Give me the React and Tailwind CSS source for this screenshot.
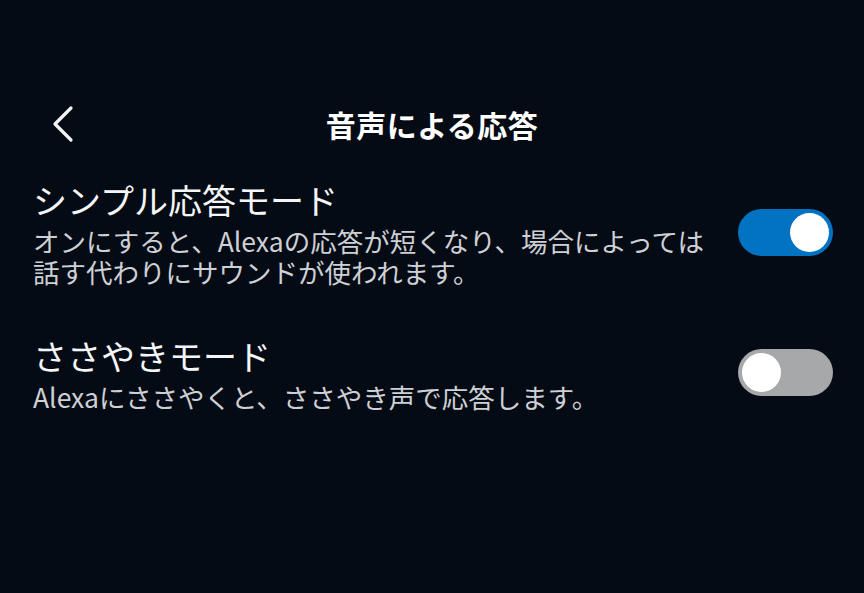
export default function App() {
  return (
    <div
      className="h-[593px] w-[864px] overflow-hidden bg-[#050b14] text-white"
      style={{ fontFamily: '"Noto Sans CJK JP", "Noto Sans", sans-serif' }}
    >
      <header className="relative mt-[92px] flex h-[64px] items-center justify-center">
        <button className="absolute left-[50px] top-1/2 -translate-y-1/2 p-0">
          <svg width="26" height="38" viewBox="0 0 26 38" fill="none">
            <path d="M21 3 L5 19 L21 35" stroke="#f2f3f4" strokeWidth="3.2" strokeLinecap="round" strokeLinejoin="round" />
          </svg>
        </button>
        <h1 className="text-[30px] font-bold leading-none tracking-[0.5px]">音声による応答</h1>
      </header>

      <div className="mt-[21px] flex flex-col gap-[46px] pl-[33px] pr-[31px]">
        <SettingRow
          title="シンプル応答モード"
          lines={["オンにすると、Alexaの応答が短くなり、場合によっては", "話す代わりにサウンドが使われます。"]}
          on
        />
        <SettingRow title="ささやきモード" lines={["Alexaにささやくと、ささやき声で応答します。"]} />
      </div>
    </div>
  );
}

function SettingRow({ title, lines, on = false }) {
  return (
    <div className="flex items-center justify-between">
      <div>
        <h2 className="text-[34px] leading-[46px] text-[#f4f5f6]">{title}</h2>
        <p className="mt-[2px] text-[26.5px] leading-[31px] text-[#cdd0d4]">
          {lines.map((line, i) => (
            <span key={i} className="block whitespace-nowrap">
              {line}
            </span>
          ))}
        </p>
      </div>
      <Toggle on={on} />
    </div>
  );
}

function Toggle({ on }) {
  return (
    <div
      className={`flex h-[47px] w-[95px] shrink-0 items-center rounded-full px-[4px] ${
        on ? "justify-end bg-[#0273c2]" : "justify-start bg-[#a7a8aa]"
      }`}
    >
      <span className="h-[39px] w-[39px] rounded-full bg-white" />
    </div>
  );
}
